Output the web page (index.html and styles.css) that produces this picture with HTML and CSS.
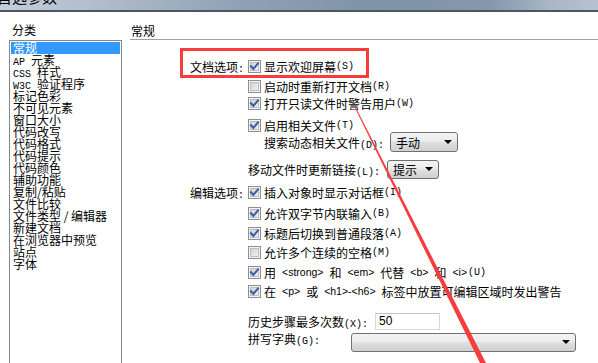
FILE: index.html
```html
<!DOCTYPE html>
<html lang="zh-CN">
<head>
<meta charset="utf-8">
<title>首选参数</title>
<link rel="stylesheet" href="styles.css">
</head>
<body>
<div class="titlebar"><span class="title">首选参数</span></div>
<div class="main">
  <div class="side">
    <div class="caption">分类</div>
    <div class="list">
      <div class="item sel">常规</div>
      <div class="item"><span class="k">AP </span>元素</div>
      <div class="item"><span class="k">CSS </span>样式</div>
      <div class="item"><span class="k">W3C </span>验证程序</div>
      <div class="item">标记色彩</div>
      <div class="item">不可见元素</div>
      <div class="item">窗口大小</div>
      <div class="item">代码改写</div>
      <div class="item">代码格式</div>
      <div class="item">代码提示</div>
      <div class="item">代码颜色</div>
      <div class="item">辅助功能</div>
      <div class="item">复制/粘贴</div>
      <div class="item">文件比较</div>
      <div class="item">文件类型 / 编辑器</div>
      <div class="item">新建文档</div>
      <div class="item">在浏览器中预览</div>
      <div class="item">站点</div>
      <div class="item">字体</div>
    </div>
  </div>
  <div class="panel">
    <div class="head">常规</div>
    <div class="form">
      <div class="row">
        <span class="lab">文档选项<span class="k">:</span></span>
        <span class="opt"><span class="cb"><svg viewBox="0 0 11 11"><path d="M2 5.2 4.4 7.8 9 2.4"/></svg></span>显示欢迎屏幕<span class="k">(S)</span></span>
      </div>
      <div class="row ind mt4">
        <span class="opt"><span class="cb"></span>启动时重新打开文档<span class="k">(R)</span></span>
      </div>
      <div class="row ind mt1">
        <span class="opt"><span class="cb"><svg viewBox="0 0 11 11"><path d="M2 5.2 4.4 7.8 9 2.4"/></svg></span>打开只读文件时警告用户<span class="k">(W)</span></span>
      </div>
      <div class="row ind mt6">
        <span class="opt"><span class="cb"><svg viewBox="0 0 11 11"><path d="M2 5.2 4.4 7.8 9 2.4"/></svg></span>启用相关文件<span class="k">(T)</span></span>
      </div>
      <div class="row ind2 mt1">
        <span class="flab w-dyn">搜索动态相关文件<span class="k">(D):</span></span>
        <span class="combo c-manual"><span>手动</span><span class="arr"></span></span>
      </div>
      <div class="row ind mt11">
        <span class="flab w-move">移动文件时更新链接<span class="k">(L):</span></span>
        <span class="combo c-tip"><span>提示</span><span class="arr"></span></span>
      </div>
      <div class="row mt7">
        <span class="lab">编辑选项<span class="k">:</span></span>
        <span class="opt"><span class="cb"><svg viewBox="0 0 11 11"><path d="M2 5.2 4.4 7.8 9 2.4"/></svg></span>插入对象时显示对话框<span class="k">(I)</span></span>
      </div>
      <div class="row ind mt5">
        <span class="opt"><span class="cb"><svg viewBox="0 0 11 11"><path d="M2 5.2 4.4 7.8 9 2.4"/></svg></span>允许双字节内联输入<span class="k">(B)</span></span>
      </div>
      <div class="row ind mt4">
        <span class="opt"><span class="cb"><svg viewBox="0 0 11 11"><path d="M2 5.2 4.4 7.8 9 2.4"/></svg></span>标题后切换到普通段落<span class="k">(A)</span></span>
      </div>
      <div class="row ind mt3">
        <span class="opt"><span class="cb"></span>允许多个连续的空格<span class="k">(M)</span></span>
      </div>
      <div class="row ind mt4">
        <span class="opt"><span class="cb"><svg viewBox="0 0 11 11"><path d="M2 5.2 4.4 7.8 9 2.4"/></svg></span>用<span class="en">&lt;strong&gt;</span>和<span class="en">&lt;em&gt;</span>代替<span class="en">&lt;b&gt;</span>和<span class="en end">&lt;i&gt;</span><span class="k">(U)</span></span>
      </div>
      <div class="row ind mt3">
        <span class="opt"><span class="cb"><svg viewBox="0 0 11 11"><path d="M2 5.2 4.4 7.8 9 2.4"/></svg></span>在<span class="en">&lt;p&gt;</span>或<span class="en">&lt;h1&gt;-&lt;h6&gt;</span>标签中放置可编辑区域时发出警告</span>
      </div>
      <div class="row ind mt14">
        <span class="flab w-hist">历史步骤最多次数<span class="k">(X):</span></span>
        <span class="num">50</span>
      </div>
      <div class="row ind row-dict">
        <span class="flab w-dict">拼写字典<span class="k">(G):</span></span>
        <span class="combo c-dict"><span></span><span class="arr"></span></span>
      </div>
    </div>
  </div>
</div>
<div class="mark"></div>
<svg class="pointer" viewBox="0 0 598 363"><polygon points="354.5,107 355.6,107 487,365 481,365"/></svg>
</body>
</html>
```

FILE: styles.css
```css
* { box-sizing: border-box; }
html, body { margin: 0; padding: 0; }
body {
  width: 598px;
  height: 363px;
  overflow: hidden;
  position: relative;
  background: #fff;
  color: #000;
  font-family: "Noto Sans CJK SC", "Liberation Sans", sans-serif;
  font-size: 12px;
}

.titlebar {
  height: 12px;
  overflow: hidden;
  border-bottom: 2px solid #4c5763;
  background: linear-gradient(90deg, #c3ceda 0%, #aebbca 18%, #8fa1b5 40%, #7f93a9 62%, #8497ac 82%, #a9b7c6 92%, #b6c2cf 100%);
}
.title {
  display: block;
  font-size: 15px;
  line-height: 15px;
  margin-top: -11px;
  margin-left: -3px;
}

.main { display: flex; padding-top: 10px; }

.side { margin-left: 9px; width: 113px; flex: none; }
.caption { height: 16px; line-height: 16px; padding-left: 3px; margin-bottom: 2px; }
.list {
  height: 340px;
  border: 1px solid #828790;
  padding: 1px;
}
.item {
  height: 12px;
  line-height: 12px;
  padding-left: 2px;
  white-space: pre;
}
.item.sel { background: #3399ff; color: #fff; }

.k {
  font-family: "Liberation Mono", monospace;
  font-size: 10px;
}
.en {
  font-family: "Liberation Sans", sans-serif;
  font-size: 10.5px;
  margin: 0 6px;
}
.en.end { margin-right: 1px; }

.panel { margin-left: 8px; flex: 1; }
.head {
  height: 18px;
  line-height: 17px;
  padding-left: 1px;
  border-bottom: 1px solid #a0a0a0;
}
.form { padding-top: 18px; }

.row {
  display: flex;
  align-items: center;
  height: 16px;
  white-space: nowrap;
}
.row.ind { padding-left: 118px; }
.row.ind2 { padding-left: 134px; }
.mt1 { margin-top: 1px; }
.mt3 { margin-top: 3px; }
.mt4 { margin-top: 4px; }
.mt5 { margin-top: 5px; }
.mt6 { margin-top: 6px; }
.mt7 { margin-top: 7px; }
.mt11 { margin-top: 11px; }
.mt14 { margin-top: 14px; }
.row-dict { margin-top: 3px; height: 20px; }

.lab {
  width: 118px;
  flex: none;
  text-align: right;
  padding-right: 4px;
}
.opt { display: flex; align-items: center; }

.cb {
  width: 13px;
  height: 13px;
  flex: none;
  margin-right: 3px;
  border: 1px solid #8e8f8f;
  background: linear-gradient(135deg, #c6cad1 0%, #e3e5e8 55%, #f8f8f8 100%);
  box-shadow: inset 0 0 0 1px #f4f4f4, inset 0 0 0 2px #b9bec5;
  display: flex;
}
.cb svg { width: 11px; height: 11px; }
.cb path { fill: none; stroke: #42609f; stroke-width: 2.1; stroke-linecap: square; }

.flab { flex: none; }
.w-dyn { width: 126px; }
.w-move { width: 139px; }
.w-hist { width: 127px; }
.w-dict { width: 103px; align-self: flex-start; line-height: 14px; }

.combo {
  flex: none;
  display: flex;
  align-items: center;
  justify-content: space-between;
  border: 1px solid #707070;
  border-radius: 3px;
  background: linear-gradient(#f3f3f3 0%, #ececec 45%, #dfdfdf 52%, #d0d0d0 100%);
  padding: 0 5px 0 5px;
}
.c-manual { width: 68px; height: 20px; }
.c-tip { width: 52px; height: 19px; }
.c-dict { width: 225px; height: 19px; }
.arr {
  width: 0;
  height: 0;
  border-left: 4px solid transparent;
  border-right: 4px solid transparent;
  border-top: 4px solid #000;
}

.num {
  flex: none;
  width: 65px;
  height: 17px;
  border: 1px solid #d6d8dc;
  border-top-color: #c3c5c9;
  padding-left: 3px;
  line-height: 15px;
  font-family: "Liberation Sans", sans-serif;
  font-size: 12px;
}

.mark {
  position: absolute;
  left: 180px;
  top: 48px;
  width: 189px;
  height: 30px;
  border: 3px solid #f83b3b;
}
.pointer {
  position: absolute;
  left: 0;
  top: 0;
  width: 598px;
  height: 363px;
  pointer-events: none;
}
.pointer polygon { fill: #f63c3c; }
```
